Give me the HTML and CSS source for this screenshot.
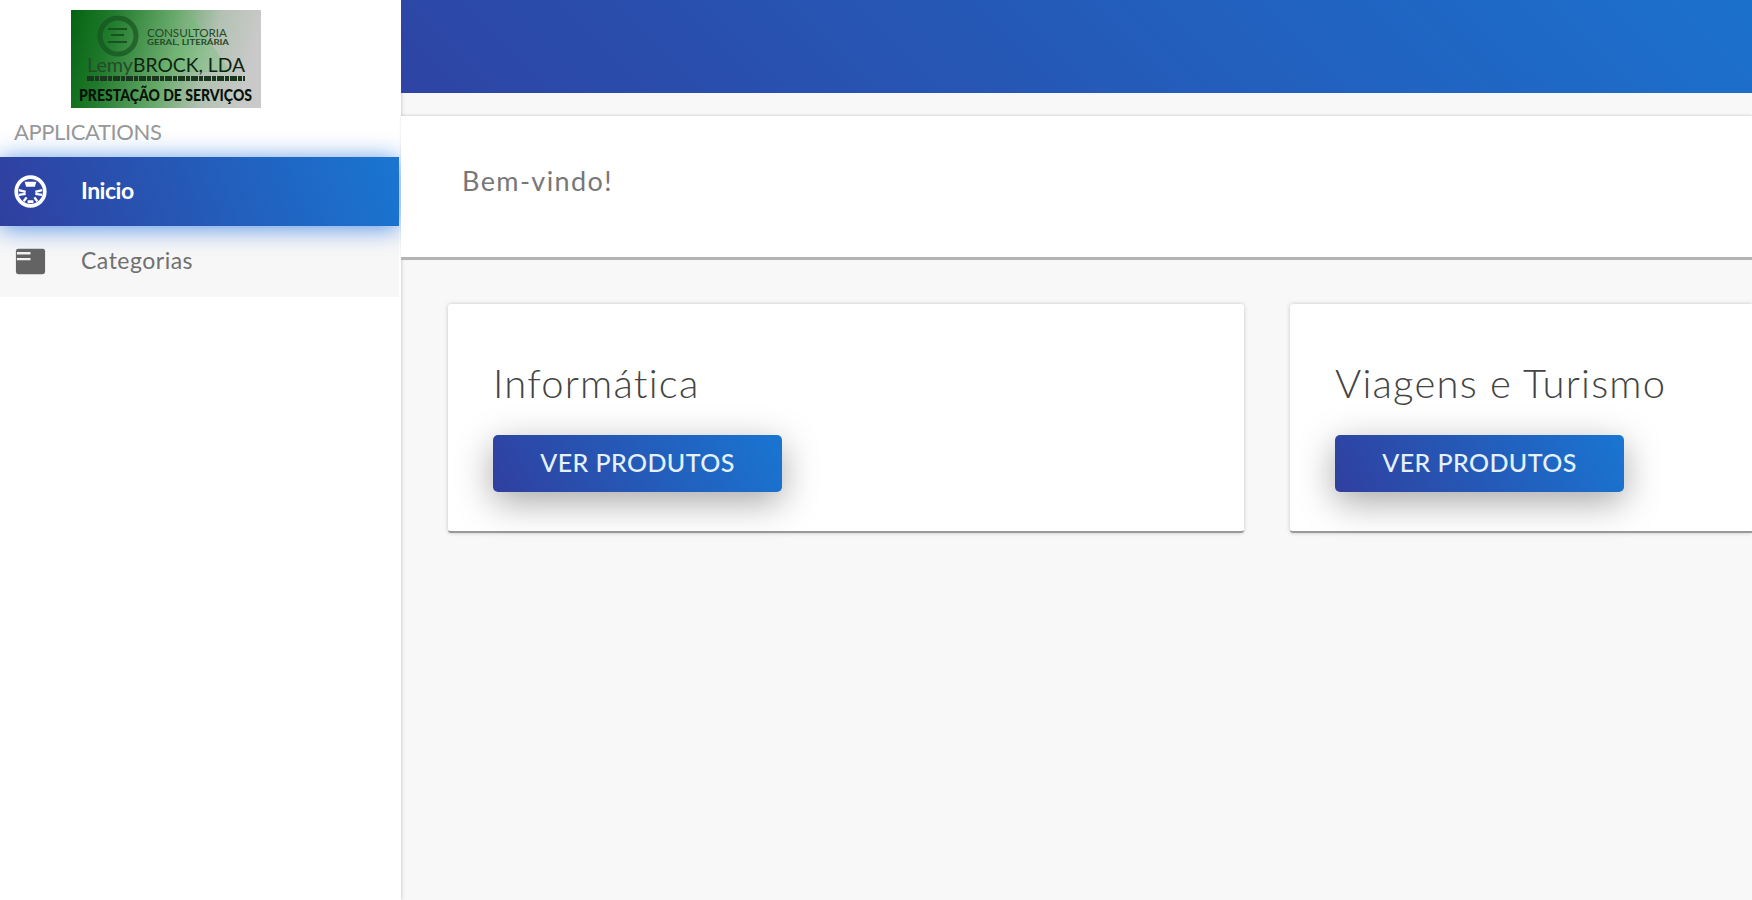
FILE: index.html
```
<!DOCTYPE html>
<html lang="pt">
<head>
  <meta charset="UTF-8">
  <title>Bem-vindo</title>
  <link rel="stylesheet" href="styles.css">
</head>
<body>
  <aside class="sidebar">
    <svg class="logo" viewBox="0 0 190 98">
      <defs>
        <linearGradient id="logoBg" x1="0" y1="0" x2="1" y2="0.12">
          <stop offset="0" stop-color="#046410"/>
          <stop offset="0.22" stop-color="#1f7a2b"/>
          <stop offset="0.55" stop-color="#69aa6c"/>
          <stop offset="0.78" stop-color="#b2c1b2"/>
          <stop offset="1" stop-color="#c9c9c9"/>
        </linearGradient>
      </defs>
      <rect width="190" height="98" fill="url(#logoBg)"/>
      <path d="M122 8L160 62H88z" fill="#5fc566" opacity="0.3"/>
      <circle cx="47" cy="26" r="18" fill="none" stroke="#17521f" stroke-width="5" opacity="0.7"/>
      <path d="M37 19h19M40 25h13M37 32h19" stroke="#17521f" stroke-width="2"/>
      <text x="76" y="27" font-size="11" fill="#25492a" textLength="80" lengthAdjust="spacingAndGlyphs">CONSULTORIA</text>
      <text x="76" y="35" font-size="8" font-weight="bold" fill="#25492a" textLength="82" lengthAdjust="spacingAndGlyphs">GERAL, LITERÁRIA</text>
      <text x="16" y="62" font-size="19" fill="#234b29" textLength="46" lengthAdjust="spacingAndGlyphs">Lemy</text>
      <text x="62" y="62" font-size="19" fill="#0f2412" textLength="112" lengthAdjust="spacingAndGlyphs">BROCK, LDA</text>
      <path d="M16 68.500h158" stroke="#1c3720" stroke-width="5" stroke-dasharray="7 1 4 1"/>
      <text x="8" y="91" font-size="17" font-weight="900" fill="#071208" textLength="173" lengthAdjust="spacingAndGlyphs">PRESTAÇÃO DE SERVIÇOS</text>
    </svg>
    <div class="nav-title">APPLICATIONS</div>
    <nav class="nav">
      <a class="nav-item active" href="#">
        <svg class="nav-icon" viewBox="0 0 36 36">
          <circle cx="18" cy="18" r="14.700" fill="none" stroke="#fff" stroke-width="3.800"/>
          <path d="M12 8h12l-1.500 5h-9z" fill="#fff"/>
          <path d="M6 16.500l7 2M30 16.500l-7 2M6 21.500l7-1M30 21.500l-7-1M11 28l3-4M25 28l-3-4" stroke="#fff" stroke-width="2.400"/>
          <path d="M15 27h6v3h-6z" fill="#fff"/>
        </svg>
        <span>Inicio</span>
      </a>
      <a class="nav-item" href="#">
        <svg class="nav-icon" viewBox="0 0 36 36">
          <rect x="3" y="5" width="30" height="26" rx="2.500" fill="#636363"/>
          <path d="M4 9.500h14M4 15.500h14" stroke="#f2f2f2" stroke-width="2.400"/>
        </svg>
        <span>Categorias</span>
      </a>
    </nav>
  </aside>

  <div class="main">
    <header class="topbar"></header>
    <section class="welcome">Bem-vindo!</section>
    <div class="cards">
      <div class="card">
        <h2>Informática</h2>
        <a class="btn" href="#">VER PRODUTOS</a>
      </div>
      <div class="card">
        <h2>Viagens e Turismo</h2>
        <a class="btn" href="#">VER PRODUTOS</a>
      </div>
    </div>
  </div>
</body>
</html>
```
FILE: styles.css
```
* {
  box-sizing: border-box;
}
body {
  margin: 0;
  height: 900px;
  display: flex;
  overflow: hidden;
  background: #f8f8f8;
  color: #444;
  font-family: Lato, "Open Sans", sans-serif;
}
a {
  text-decoration: none;
}
.sidebar {
  flex: 0 0 401px;
  overflow: clip;
  background: #fff;
  box-shadow: 0 0 4px rgba(0, 0, 0, 0.25);
}
.logo {
  display: block;
  width: 190px;
  height: 98px;
  margin: 10px 0 0 71px;
  overflow: visible;
}
.nav-title {
  height: 49px;
  padding: 10px 0 0 14px;
  font-size: 22px;
  line-height: 28px;
  letter-spacing: -0.4px;
  color: #999;
}
.nav {
  width: 399px;
}
.nav-item {
  display: flex;
  align-items: center;
  height: 71px;
  padding-left: 13px;
  background: #f7f7f7;
  color: #707070;
  font-size: 23px;
  letter-spacing: 0.5px;
}
.nav-item span {
  padding-bottom: 3px;
}
.nav-icon {
  width: 35px;
  height: 35px;
  margin-right: 33px;
}
.nav-item.active {
  position: relative;
  height: 69px;
  background: linear-gradient(70deg, #303f9f, #1976d2);
  box-shadow: 0 2px 24px rgba(25, 110, 225, 0.75);
  color: #fff;
  font-weight: bold;
  letter-spacing: -0.5px;
}
.main {
  flex: 1;
  min-width: 0;
}
.topbar {
  height: 93px;
  background: linear-gradient(45deg, #303f9f -12%, #1976d2 112%);
}
.welcome {
  height: 144px;
  margin-top: 23px;
  padding: 48px 0 0 61px;
  background: #fff;
  border-bottom: 3px solid #b3b3b3;
  box-shadow: 0 -1px 2px rgba(0, 0, 0, 0.12);
  color: #777;
  font-size: 27px;
  line-height: 33px;
  letter-spacing: 1.4px;
}
.cards {
  display: grid;
  grid-template-columns: 796px 1fr;
  gap: 46px;
  padding: 44px 0 0 47px;
}
.card {
  height: 229px;
  padding: 55px 0 0 45px;
  background: #fff;
  border-bottom: 2px solid #999;
  border-radius: 3px;
  box-shadow: 0 0 4px rgba(0, 0, 0, 0.2);
}
.card:last-child {
  border-radius: 3px 0 0 3px;
}
.card h2 {
  margin: 0 0 28px;
  font-size: 40px;
  font-weight: 300;
  line-height: 48px;
  letter-spacing: 1.2px;
}
.btn {
  display: flex;
  align-items: center;
  justify-content: center;
  width: 289px;
  height: 57px;
  padding-bottom: 3px;
  border-radius: 5px;
  background: linear-gradient(60deg, #303f9f, #1976d2);
  box-shadow: 0 10px 36px rgba(0, 0, 0, 0.35);
  color: #e4f1ff;
  font-size: 25px;
  font-weight: 500;
  letter-spacing: 0.4px;
}
```
